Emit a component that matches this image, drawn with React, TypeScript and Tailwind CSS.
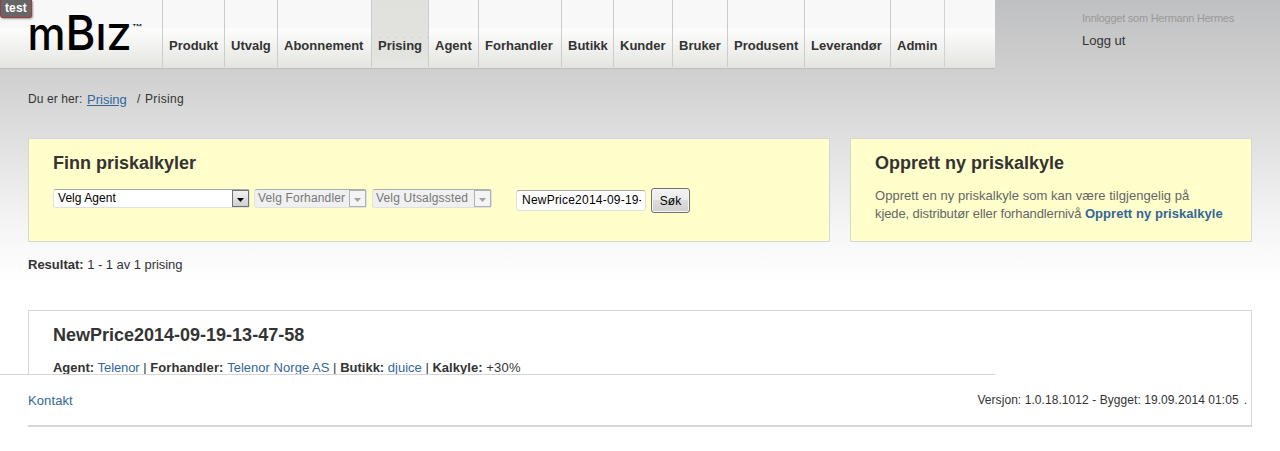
import type { ReactNode } from "react";

const navItems = [
  { label: "Produkt", width: "w-[62px]" },
  { label: "Utvalg", width: "w-[53px]" },
  { label: "Abonnement", width: "w-[94px]" },
  { label: "Prising", width: "w-[57px]", active: true },
  { label: "Agent", width: "w-[50px]" },
  { label: "Forhandler", width: "w-[83px]" },
  { label: "Butikk", width: "w-[52px]" },
  { label: "Kunder", width: "w-[59px]" },
  { label: "Bruker", width: "w-[55px]" },
  { label: "Produsent", width: "w-[77px]" },
  { label: "Leverandør", width: "w-[86px]" },
  { label: "Admin", width: "w-[54px]" },
];

function Logo() {
  return (
    <svg width="162" height="68" viewBox="0 0 162 68" className="shrink-0 fill-black" fontFamily="Inter, sans-serif">
      <text x="27.5" y="49.5" fontSize="46" fontWeight="500" textLength="38" lengthAdjust="spacingAndGlyphs">m</text>
      <text x="65.5" y="49.5" fontSize="48.5" fontWeight="500" textLength="30" lengthAdjust="spacingAndGlyphs">B</text>
      <text x="96" y="49.5" fontSize="36" fontWeight="600" textLength="10" lengthAdjust="spacingAndGlyphs">I</text>
      <text x="107" y="49.5" fontSize="36" fontWeight="600" textLength="24" lengthAdjust="spacingAndGlyphs">Z</text>
      <text x="132" y="31" fontSize="9" textLength="10" lengthAdjust="spacingAndGlyphs">™</text>
    </svg>
  );
}

function Header() {
  return (
    <header className="flex h-[69px] w-[995px] border-b border-[#bfbfbf] bg-[linear-gradient(#f8f8f8_0px,#f8f8f8_28px,#fdfdfd_29px,#e4e4e0_68px)]">
      <Logo />
      <nav className="flex h-[67px] border-r border-[#d2d2d2]">
        {navItems.map((item) => (
          <a
            key={item.label}
            className={`flex flex-col border-l border-[#cccccc] pl-1.5 text-[13px] leading-4 font-bold whitespace-nowrap ${item.width} ${
              item.active ? "bg-[linear-gradient(#e0e1dc_0px,#e2e3de_50px,#e5e5e2_67px)]" : ""
            }`}
          >
            <span
              className={`mt-[37px] h-px shrink-0 ${
                item.active ? "bg-[repeating-linear-gradient(90deg,transparent_0px,transparent_1px,#c4c4bf_1px,#c4c4bf_2px,transparent_2px,transparent_8px)]" : ""
              }`}
            />
            {item.label}
          </a>
        ))}
      </nav>
    </header>
  );
}

function Dropdown({ label, width, disabled }: { label: string; width: string; disabled?: boolean }) {
  return (
    <div
      className={`flex h-[19px] justify-between rounded-[3px] border text-[12px] leading-[17px] whitespace-nowrap ${width} ${
        disabled
          ? "border-[#e0e0dc] border-t-[#adadad] bg-[#f0f0f0] tracking-[0.17px] text-[#777]"
          : "border-[#e0e0dc] border-t-[#a6a6a6] bg-white pl-px tracking-[0.05px] text-black"
      }`}
    >
      <span className="pl-[3px]">{label}</span>
      <span
        className={`flex h-[17px] w-[17px] shrink-0 items-center justify-center border ${
          disabled ? "border-[#adb2b5] bg-[#f4f4f4]" : "border-[#707070] bg-linear-to-b from-[#f2f2f2] to-[#cfcfcf]"
        }`}
      >
        <svg width="7" height="4" viewBox="0 0 7 4" className={`mt-0.5 ${disabled ? "fill-[#a0a0a0]" : "fill-black"}`}>
          <path d="M0 0h7L3.5 4z" />
        </svg>
      </span>
    </div>
  );
}

function Panel({ title, className, children }: { title: string; className: string; children: ReactNode }) {
  return (
    <section className={`h-[104px] border border-[#d6d6d6] bg-[#ffffcc] pt-3 pl-6 ${className}`}>
      <h2 className="text-[18px] leading-6 font-bold">{title}</h2>
      {children}
    </section>
  );
}

export default function App() {
  return (
    <div className="relative flex h-[451px] w-[1280px] flex-col overflow-hidden bg-[linear-gradient(#bfc0c2_0px,#cfcfcf_69px,#dfdfdf_138px,#f6f6f6_230px,#ffffff_285px)] font-['Liberation_Sans',Arial,sans-serif] text-[13px] text-[#333]">
      <div className="absolute top-0 left-0 flex h-[18px] w-8 items-start justify-center rounded-b-[3px] border border-t-0 border-[#a33a3a] bg-[#666] text-[12px] leading-4 font-bold text-white shadow-[1px_1px_2px_#999]">
        <span className="tracking-[0.2px]">test</span>
      </div>

      <div className="flex">
        <Header />
        <div className="flex flex-col pt-3 pl-[87px]">
          <span className="text-[11px] leading-[13px] tracking-[-0.25px] text-[#999]">Innlogget som Hermann Hermes</span>
          <a className="mt-2 leading-4">Logg ut</a>
        </div>
      </div>

      <div className="flex h-[69px] pt-[22px] pl-7 text-[12px] leading-4">
        <span className="w-[59px] tracking-[0.1px]">Du er her:</span>
        <a className="w-[50px] pt-px text-[13px] leading-[15px] text-[#336699] underline">Prising</a>
        <span className="w-2">/</span>
        <span className="tracking-[0.35px]">Prising</span>
      </div>

      <div className="flex gap-5 pl-7">
        <Panel title="Finn priskalkyler" className="w-[802px]">
          <div className="mt-3.5 flex items-start">
            <div className="flex gap-[5px]">
              <Dropdown label="Velg Agent" width="w-[197px] -mr-px" />
              <Dropdown label="Velg Forhandler" width="w-[113px]" disabled />
              <Dropdown label="Velg Utsalgssted" width="w-[120px]" disabled />
            </div>
            <input
              type="text"
              defaultValue="NewPrice2014-09-19-13-47-58"
              className="mt-px ml-6 h-[21px] w-[130px] rounded-[3px] border border-[#e0e0dc] border-t-[#a6a6a6] bg-white pr-1 pb-0.5 pl-[5px] text-[12px] leading-[18px] tracking-[0.22px] text-black"
            />
            <button className="-mt-px ml-[5px] h-[25px] w-[39px] rounded-[3px] border border-[#707070] bg-[linear-gradient(#f2f2f2_0%,#ebebeb_49%,#dddddd_50%,#cfcfcf_100%)] text-[12px] leading-[22px] text-black shadow-[inset_0_0_0_1px_#f5f5f5]">
              Søk
            </button>
          </div>
        </Panel>
        <Panel title="Opprett ny priskalkyle" className="w-[402px]">
          <p className="mt-3 leading-[18px] whitespace-nowrap text-[#666]">
            <span className="tracking-[0.04px]">Opprett en ny priskalkyle som kan være tilgjengelig på</span>
            <br />
            <span className="tracking-[-0.1px]">kjede, distributør eller forhandlernivå </span>
            <a className="font-bold tracking-[0.06px] text-[#336699]">Opprett ny priskalkyle</a>
          </p>
        </Panel>
      </div>

      <p className="mt-[15px] pl-7 leading-4">
        <b>Resultat:</b> <span className="tracking-[-0.05px]">1 - 1 av 1 prising</span>
      </p>

      <main className="mt-[37px] ml-7 flex h-[117px] w-[1224px] flex-col border border-b-2 border-[#d6d6d6] bg-white">
        <h2 className="mt-3 ml-6 text-[18px] leading-6 font-bold">NewPrice2014-09-19-13-47-58</h2>
        <div className="mt-[13px] ml-6 h-[14px] shrink-0 overflow-hidden leading-4 whitespace-nowrap">
          <b className="tracking-[-0.03px]">Agent:</b> <a className="tracking-[-0.1px] text-[#336699]">Telenor</a> |{" "}
          <b className="tracking-[0.1px]">Forhandler:</b> <a className="tracking-[0.03px] text-[#336699]">Telenor Norge AS</a> |{" "}
          <b>Butikk:</b> <a className="text-[#336699]">djuice</a> | <b className="tracking-[0.05px]">Kalkyle:</b>{" "}
          <span className="tracking-[0.2px]">+30%</span>
        </div>
        <footer className="-ml-[29px] flex h-[51px] w-[1251px] shrink-0 flex-col bg-white">
          <div className="h-px w-[995px] shrink-0 bg-[#d6d6d6]" />
          <div className="flex justify-between pt-[17px] pr-1 pl-7 leading-4">
            <a className="pt-px tracking-[0.1px] text-[#336699]">Kontakt</a>
            <span className="flex gap-[5px] text-[12px]">
              <span className="tracking-[0.065px]">Versjon: 1.0.18.1012 - Bygget: 19.09.2014 01:05</span>
              <span>.</span>
            </span>
          </div>
        </footer>
      </main>
    </div>
  );
}
